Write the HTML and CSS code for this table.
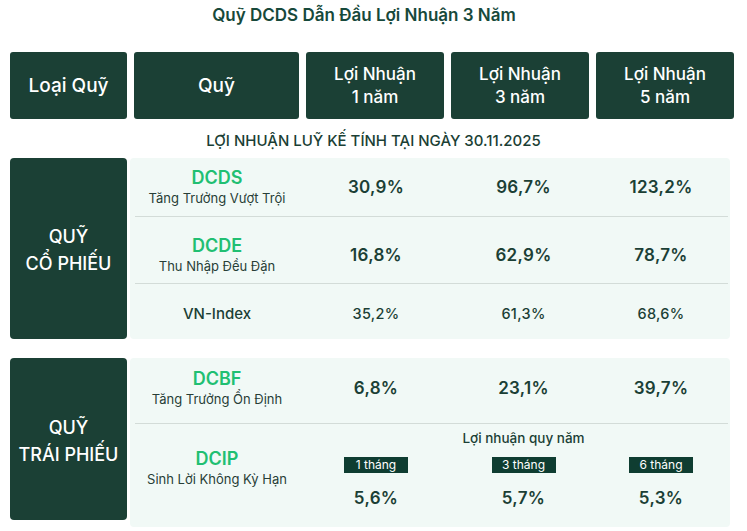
FILE: index.html
```html
<!DOCTYPE html>
<html lang="vi">
<head>
<meta charset="utf-8">
<link rel="stylesheet" href="styles.css">
</head>
<body>
<div class="page">
  <h1 class="title">Quỹ DCDS Dẫn Đầu Lợi Nhuận 3 Năm</h1>

  <div class="head">
    <div class="hcell big">Loại Quỹ</div>
    <div class="hcell big">Quỹ</div>
    <div class="hcell">Lợi Nhuận<br>1 năm</div>
    <div class="hcell">Lợi Nhuận<br>3 năm</div>
    <div class="hcell">Lợi Nhuận<br>5 năm</div>
  </div>

  <div class="caption">LỢI NHUẬN LUỸ KẾ TÍNH TẠI NGÀY 30.11.2025</div>

  <div class="group g1">
    <div class="glabel">QUỸ<br>CỔ PHIẾU</div>
    <div class="panel">
      <div class="row r1">
        <div class="fund"><div class="code">DCDS</div><div class="desc">Tăng Trưởng Vượt Trội</div></div>
        <div class="val">30,9%</div>
        <div class="val">96,7%</div>
        <div class="val">123,2%</div>
      </div>
      <div class="row r2">
        <div class="fund"><div class="code">DCDE</div><div class="desc">Thu Nhập Đều Đặn</div></div>
        <div class="val">16,8%</div>
        <div class="val">62,9%</div>
        <div class="val">78,7%</div>
      </div>
      <div class="row r3">
        <div class="fund"><div class="index">VN-Index</div></div>
        <div class="val small">35,2%</div>
        <div class="val small">61,3%</div>
        <div class="val small">68,6%</div>
      </div>
    </div>
  </div>

  <div class="group g2">
    <div class="glabel">QUỸ<br>TRÁI PHIẾU</div>
    <div class="panel">
      <div class="row r4">
        <div class="fund"><div class="code">DCBF</div><div class="desc">Tăng Trưởng Ổn Định</div></div>
        <div class="val">6,8%</div>
        <div class="val">23,1%</div>
        <div class="val">39,7%</div>
      </div>
      <div class="row r5">
        <div class="fund fspan"><div class="code">DCIP</div><div class="desc">Sinh Lời Không Kỳ Hạn</div></div>
        <div class="note">Lợi nhuận quy năm</div>
        <div class="badgecell c3"><span class="badge">1 tháng</span></div>
        <div class="badgecell c4"><span class="badge">3 tháng</span></div>
        <div class="badgecell c5"><span class="badge">6 tháng</span></div>
        <div class="val c3">5,6%</div>
        <div class="val c4">5,7%</div>
        <div class="val c5">5,3%</div>
      </div>
    </div>
  </div>
</div>
</body>
</html>
```

FILE: styles.css
```css
* { box-sizing: border-box; margin: 0; padding: 0; }

body {
  background: #ffffff;
  font-family: Inter, "Noto Sans", "DejaVu Sans", sans-serif;
  color: #1b3f35;
}

.page {
  width: 747px;
  height: 531px;
  overflow: hidden;
}

.title {
  height: 52px;
  padding-top: 4px;
  padding-right: 19px;
  text-align: center;
  font-size: 17px;
  font-weight: 600;
  line-height: 22px;
  color: #17493b;
}

.head {
  display: grid;
  grid-template-columns: 117px 165px 138px 138px 138px;
  column-gap: 7px;
  margin-left: 10px;
  height: 67px;
}

.hcell {
  background: #1b4035;
  border-radius: 3px;
  color: #ffffff;
  font-size: 17px;
  font-weight: 500;
  line-height: 23px;
  display: flex;
  align-items: center;
  justify-content: center;
  text-align: center;
}

.hcell.big { font-size: 19px; }

.caption {
  height: 39px;
  padding-top: 12px;
  text-align: center;
  font-size: 15px;
  font-weight: 500;
  line-height: 20px;
  color: #1b3f35;
}

.group {
  display: grid;
  grid-template-columns: 117px 600px;
  column-gap: 3px;
  margin-left: 10px;
  align-items: start;
}

.g2 { margin-top: 19px; }

.glabel {
  background: #1b4035;
  border-radius: 4px;
  color: #ffffff;
  font-size: 18px;
  font-weight: 500;
  line-height: 27px;
  display: flex;
  align-items: center;
  justify-content: center;
  text-align: center;
}

.g1 .glabel { height: 181px; padding-top: 2px; }
.g2 .glabel { height: 162px; padding-top: 4px; }

.panel {
  background: #f1f9f6;
  border-radius: 4px;
  padding: 0 2px 0 5px;
}

.row {
  display: grid;
  grid-template-columns: 164px 154px 141px 134px;
  align-items: center;
  text-align: center;
}

.row + .row { border-top: 1px solid #d3dcd8; }

.r1 { height: 58px; }
.r2 { height: 67px; padding-top: 9px; }
.r3 { height: 56px; padding-top: 5px; }
.r4 { height: 65px; padding-bottom: 5px; }

.r5 {
  height: 104px;
  grid-template-rows: 23px 16px 1fr;
  row-gap: 6px;
  padding-top: 4px;
  align-items: start;
}

.fund { text-align: center; }

.code {
  font-size: 18px;
  font-weight: 600;
  line-height: 22px;
  color: #21bf72;
}

.desc {
  font-size: 13px;
  line-height: 18px;
  color: #283e37;
}

.index {
  font-size: 15px;
  font-weight: 500;
  line-height: 20px;
  color: #1b3f35;
}

.val {
  font-size: 17px;
  font-weight: 600;
  line-height: 22px;
  color: #1b3f35;
  letter-spacing: 0.3px;
}

.val.small {
  font-size: 14.5px;
  font-weight: 500;
}

.fspan {
  grid-column: 1;
  grid-row: 1 / 4;
  margin-top: 20px;
}

.note {
  grid-column: 3;
  grid-row: 1;
  font-size: 13.5px;
  font-weight: 500;
  line-height: 18px;
  color: #1b3f35;
  white-space: nowrap;
  padding-top: 1px;
}

.badgecell { grid-row: 2; display: flex; justify-content: center; }
.c3 { grid-column: 2; }
.c4 { grid-column: 3; }
.c5 { grid-column: 4; }

.badge {
  display: inline-block;
  width: 64px;
  height: 16px;
  background: #0f3d31;
  color: #ffffff;
  font-size: 12px;
  line-height: 16px;
  text-align: center;
}

.r5 .val { grid-row: 3; padding-top: 8px; }
```
